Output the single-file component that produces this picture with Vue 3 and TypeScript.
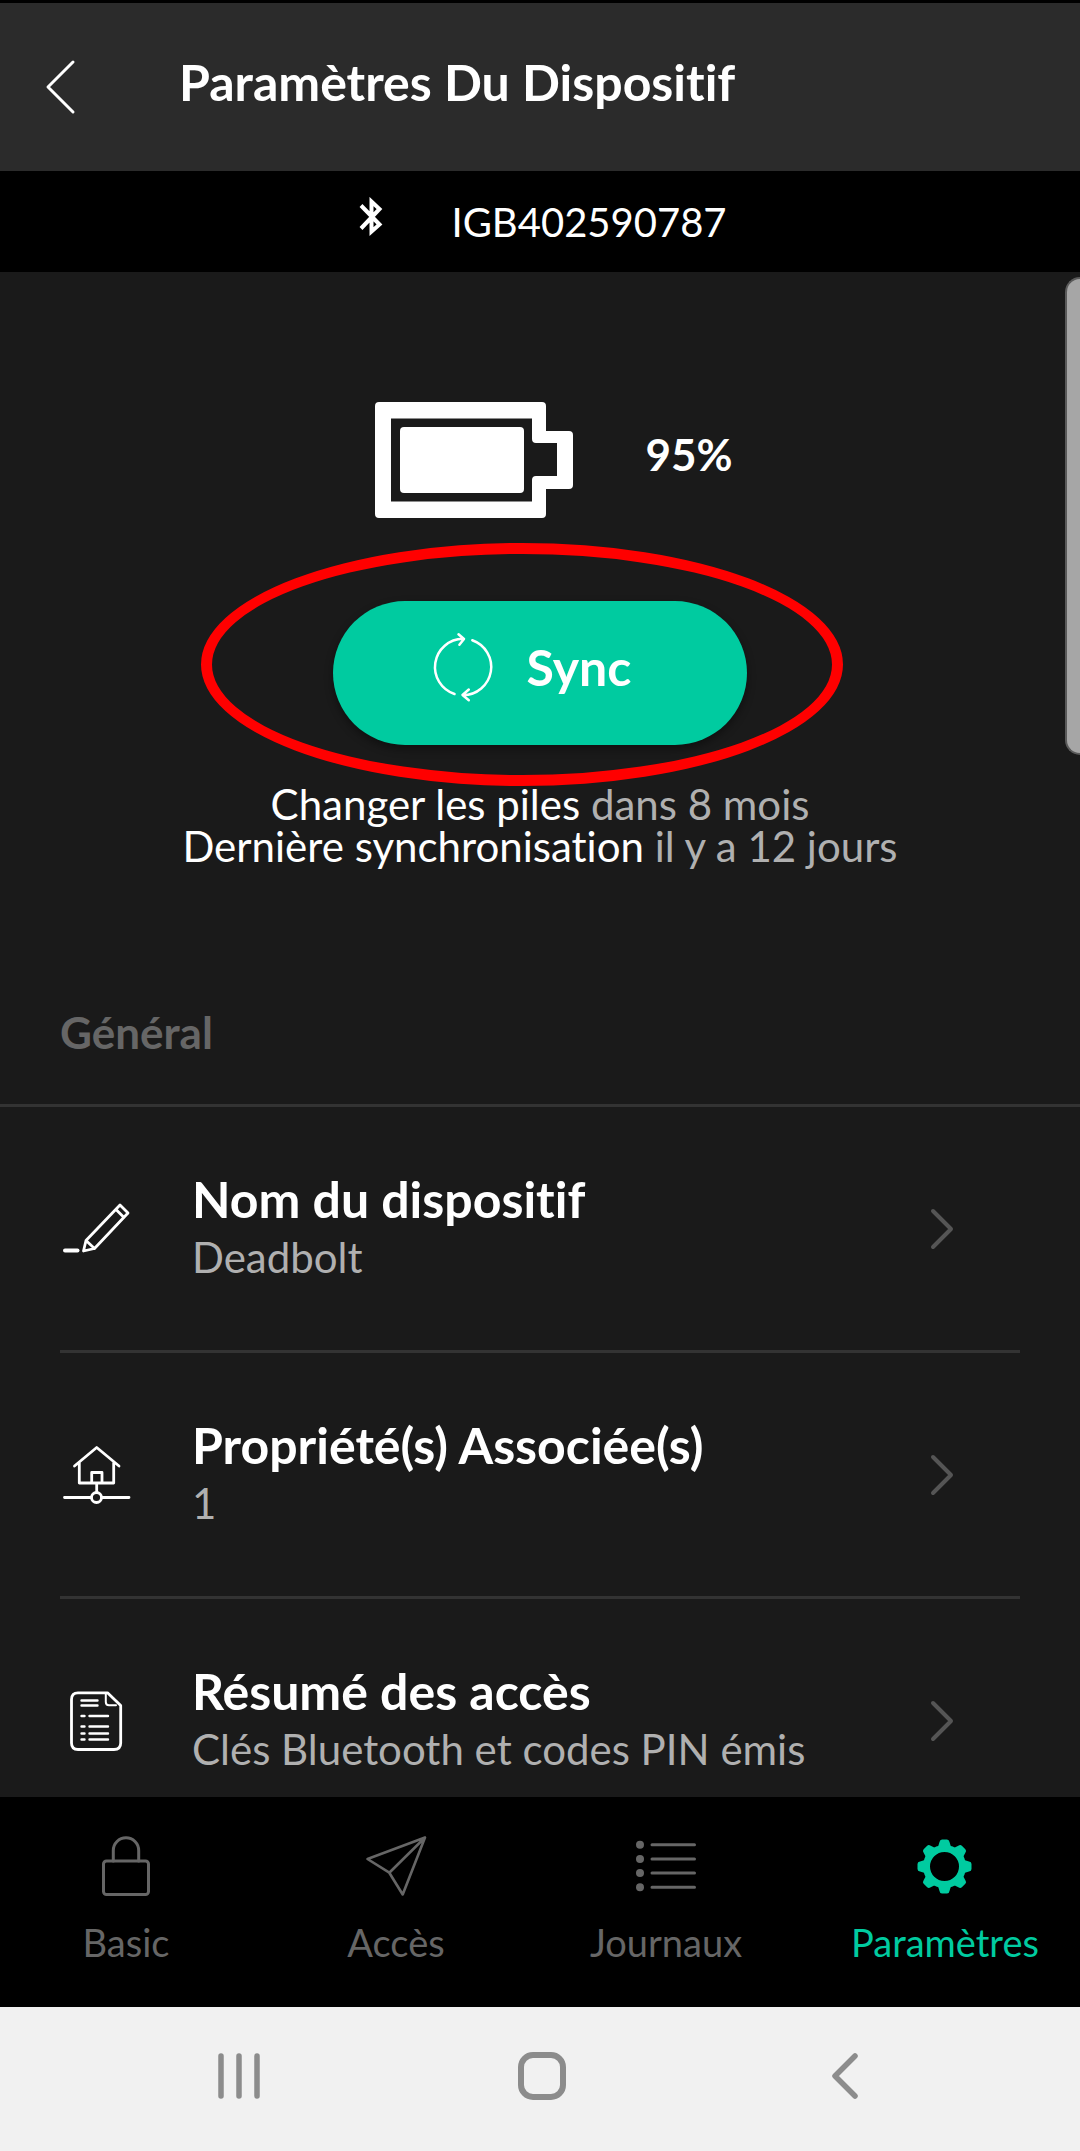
<script setup lang="ts">
import { ref } from 'vue'

type IconName = 'pencil' | 'house' | 'document'
type TabName = 'basic' | 'access' | 'journal' | 'settings'

interface SettingRow {
  icon: IconName
  title: string
  detail: string
}

interface Tab {
  id: TabName
  label: string
}

const rows: SettingRow[] = [
  { icon: 'pencil', title: 'Nom du dispositif', detail: 'Deadbolt' },
  { icon: 'house', title: 'Propriété(s) Associée(s)', detail: '1' },
  { icon: 'document', title: 'Résumé des accès', detail: 'Clés Bluetooth et codes PIN émis' },
]

const tabs: Tab[] = [
  { id: 'basic', label: 'Basic' },
  { id: 'access', label: 'Accès' },
  { id: 'journal', label: 'Journaux' },
  { id: 'settings', label: 'Paramètres' },
]

const activeTab = ref<TabName>('settings')
const gearAngles: number[] = [0, 45, 90, 135, 180, 225, 270, 315]
</script>

<template>
  <div class="app">
    <header class="header">
      <button class="back" type="button" aria-label="Retour">
        <svg width="32" height="56" viewBox="0 0 32 56" fill="none" stroke="currentColor" stroke-width="3" stroke-linecap="round" stroke-linejoin="round">
          <path d="M29 3 4 28l25 25" />
        </svg>
      </button>
      <h1 class="title">Paramètres Du Dispositif</h1>
    </header>

    <div class="device">
      <svg width="24" height="50" viewBox="0 0 24 50" fill="none" stroke="currentColor" stroke-width="4" aria-hidden="true">
        <path d="M2 8.500 20.500 27.500 12.500 34.500V4.500L20.500 12 2 31.500" />
      </svg>
      <span>IGB402590787</span>
    </div>

    <main class="content">
      <section class="status">
        <div class="battery">
          <svg width="198" height="116" viewBox="0 0 198 116" aria-hidden="true">
            <path
              fill="currentColor"
              fill-rule="evenodd"
              d="M4 0H167Q171 0 171 4V29H194Q198 29 198 33V83Q198 87 194 87H171V112Q171 116 167 116H4Q0 116 0 112V4Q0 0 4 0ZM16 16.500V99.500H157V78Q157 74 161 74H182V41H161Q157 41 157 37V16.500Z"
            />
            <rect x="25" y="25" width="124" height="66" rx="4" fill="currentColor" />
          </svg>
          <strong>95%</strong>
        </div>

        <div class="sync-wrap">
          <button class="sync" type="button">
            <svg width="72" height="72" viewBox="0 0 72 72" fill="none" stroke="currentColor" stroke-width="2.500" stroke-linecap="round" stroke-linejoin="round" aria-hidden="true">
              <path d="M27.500 63A28.300 28.300 0 0 1 36 7.800M31.500 3.200 37 8l-4.600 5.800" />
              <path d="M45.300 9.200A28.300 28.300 0 0 1 36 64.200M41.800 58.500 35.500 64l6.300 5.200" />
            </svg>
            <span>Sync</span>
          </button>
          <span class="highlight" aria-hidden="true"></span>
        </div>

        <p class="summary">
          Changer les piles <span class="muted">dans 8 mois</span><br />
          Dernière synchronisation <span class="muted">il y a 12 jours</span>
        </p>
      </section>

      <h2 class="section-title">Général</h2>

      <ul class="rows">
        <li v-for="row in rows" :key="row.icon">
          <button class="row" type="button">
            <svg class="row-icon" width="72" height="72" viewBox="0 0 72 72" fill="none" stroke="currentColor" stroke-width="2.800" stroke-linecap="round" stroke-linejoin="round" aria-hidden="true">
              <template v-if="row.icon === 'pencil'">
                <path d="M60 12 68 20 34.500 55.500 23.500 58 26 47.500ZM56 16.500l8 8M26 47.500l8.500 8" />
                <path d="M5 57.500H17.500" stroke-width="4" />
              </template>
              <template v-else-if="row.icon === 'house'">
                <path d="M14.500 27 36.700 8.500 59 27M19.300 24V44H53.700V24M31.700 44V33.500H42V44M36.700 44V53M4.500 58.500H31M42 58.500H69" />
                <circle cx="36.500" cy="58.500" r="5" />
              </template>
              <template v-else>
                <path d="M18 7.800H47.500L60.700 20.500V58Q60.700 64.500 54 64.500H18Q11.500 64.500 11.500 58V14.500Q11.500 7.800 18 7.800Z" />
                <path d="M45.800 8.500V17Q45.800 20.200 49 20.200H56" stroke-width="2" />
                <path d="M21.500 15.500H37.500M21.500 20.500H37.500M21.500 31H24.500M29.500 31H48M21.500 41.500H24.500M29.500 41.500H48M21.500 48.500H24.500M29.500 48.500H48M21.500 54.500H24.500M29.500 54.500H48" stroke-width="2.400" />
              </template>
            </svg>
            <span class="row-text">
              <span class="row-title">{{ row.title }}</span>
              <span class="row-detail">{{ row.detail }}</span>
            </span>
            <svg class="chevron" width="24" height="44" viewBox="0 0 24 44" fill="none" stroke="currentColor" stroke-width="4" stroke-linecap="round" stroke-linejoin="round" aria-hidden="true">
              <path d="M3 4 21 22 3 40" />
            </svg>
          </button>
        </li>
      </ul>

      <span class="scrollbar" aria-hidden="true"></span>
    </main>

    <nav class="tabs">
      <button
        v-for="tab in tabs"
        :key="tab.id"
        type="button"
        class="tab"
        :class="{ active: tab.id === activeTab }"
        @click="activeTab = tab.id"
      >
        <svg width="64" height="64" viewBox="0 0 64 64" fill="none" stroke="currentColor" stroke-width="3" stroke-linecap="round" stroke-linejoin="round" aria-hidden="true">
          <template v-if="tab.id === 'basic'">
            <rect x="9.500" y="27" width="45" height="33.500" rx="3" />
            <path d="M19.300 27V16.500a12.700 12.700 0 0 1 25.400 0V27" />
          </template>
          <path v-else-if="tab.id === 'access'" d="M61 3.500 3.500 25 25.300 38.700 38.700 60.500ZM61 3.500 25.300 38.700" stroke-width="2.600" />
          <template v-else-if="tab.id === 'journal'">
            <g fill="currentColor" stroke="none">
              <circle cx="6" cy="10.700" r="4" />
              <circle cx="6" cy="25" r="4" />
              <circle cx="6" cy="39" r="4" />
              <circle cx="6" cy="53.300" r="4" />
            </g>
            <path d="M18 10.700H60.500M18 25H60.500M18 39H60.500M18 53.300H60.500" />
          </template>
          <template v-else>
            <circle cx="31.500" cy="32.500" r="18" stroke-width="7" />
            <path
              v-for="angle in gearAngles"
              :key="angle"
              d="M24.500 14.500 26.500 8Q26.900 5.500 29 5.500H34Q36.100 5.500 36.500 8L38.500 14.500Z"
              fill="currentColor"
              stroke="none"
              :transform="`rotate(${angle} 31.5 32.5)`"
            />
          </template>
        </svg>
        <span>{{ tab.label }}</span>
      </button>
    </nav>

    <div class="system">
      <button type="button" aria-label="Applications récentes">
        <svg width="48" height="48" viewBox="0 0 48 48" fill="none" stroke="currentColor" stroke-width="5.500" stroke-linecap="round">
          <path d="M6 4V44M24 4V44M42 4V44" />
        </svg>
      </button>
      <button type="button" aria-label="Accueil">
        <svg width="48" height="48" viewBox="0 0 48 48" fill="none" stroke="currentColor" stroke-width="6">
          <rect x="3" y="3" width="42" height="42" rx="12" />
        </svg>
      </button>
      <button type="button" aria-label="Retour système">
        <svg width="48" height="48" viewBox="0 0 48 48" fill="none" stroke="currentColor" stroke-width="5.500" stroke-linecap="round" stroke-linejoin="round">
          <path d="M34 4 14 24 34 44" />
        </svg>
      </button>
    </div>
  </div>
</template>

<style>
body {
  margin: 0;
  background: #1a1a1a;
}
</style>

<style scoped>
.app {
  display: flex;
  flex-direction: column;
  height: 100vh;
  box-sizing: border-box;
  border-top: 3px solid #000;
  background: #1a1a1a;
  color: #fff;
  font-family: Lato, "Open Sans", sans-serif;
  font-size: 40px;
  font-variant-ligatures: none;
  line-height: 48px;
}

button {
  margin: 0;
  padding: 0;
  border: 0;
  background: none;
  color: inherit;
  font: inherit;
  font-variant-ligatures: none;
  cursor: pointer;
}

svg {
  display: block;
  flex: none;
}

.header {
  display: flex;
  align-items: center;
  flex: none;
  height: 168px;
  padding: 0 44px;
  background: #2b2b2b;
}

.title {
  margin: 0 0 10px 103px;
  font-size: 50px;
  font-weight: 700;
  line-height: 56px;
}

.device {
  display: flex;
  align-items: center;
  justify-content: center;
  gap: 68px;
  flex: none;
  height: 101px;
  padding-left: 6px;
  background: #000;
}

.content {
  position: relative;
  flex: 1;
  min-height: 0;
  overflow: hidden;
}

.status {
  display: flex;
  flex-direction: column;
  align-items: center;
  padding-top: 130px;
}

.battery {
  display: flex;
  align-items: center;
  gap: 72px;
  padding-left: 28px;
}

.battery strong {
  padding-bottom: 12px;
  font-size: 44px;
  font-weight: 700;
}

.sync-wrap {
  position: relative;
  margin-top: 83px;
}

.sync {
  display: flex;
  align-items: center;
  justify-content: center;
  gap: 28px;
  width: 414px;
  height: 144px;
  padding: 0 22px 12px 0;
  box-sizing: border-box;
  border-radius: 72px;
  background: #00cba0;
  box-shadow: 0 4px 8px rgba(0, 0, 0, 0.4);
  font-size: 50px;
  font-weight: 700;
}

/* Red ellipse drawn over the sync button */
.highlight {
  position: absolute;
  top: -58px;
  left: -132px;
  width: 642px;
  height: 243px;
  box-sizing: border-box;
  border: 11px solid #f00;
  border-radius: 50%;
  pointer-events: none;
}

.summary {
  margin: 38px 0 0;
  font-size: 42px;
  line-height: 42px;
  text-align: center;
}

.muted {
  color: #b0b0b0;
}

.section-title {
  margin: 0;
  padding: 141px 60px 48px;
  border-bottom: 3px solid #333;
  color: #666;
  font-size: 44px;
  font-weight: 700;
}

.rows {
  margin: 0;
  padding: 0 60px;
  list-style: none;
}

.rows li + li {
  border-top: 3px solid #333;
}

.row {
  display: flex;
  align-items: center;
  width: 100%;
  height: 243px;
  text-align: left;
}

.row-text {
  flex: 1;
  padding: 0 0 4px 60px;
}

.row-title,
.row-detail {
  display: block;
}

.row-title {
  font-size: 50px;
  font-weight: 700;
  line-height: 60px;
}

.row-detail {
  color: #b0b0b0;
  font-size: 42px;
  line-height: 56px;
}

.chevron {
  margin-right: 66px;
  color: #555;
}

.scrollbar {
  position: absolute;
  top: 5px;
  right: 0;
  width: 15px;
  height: 478px;
  box-sizing: border-box;
  border: 2px solid #5a5a5a;
  border-right: 0;
  border-radius: 15px 0 0 15px;
  background: #a6a6a6;
}

.tabs {
  display: grid;
  grid-template-columns: repeat(4, 1fr);
  flex: none;
  height: 210px;
  background: #000;
  color: #666;
  font-size: 38px;
}

.tab {
  display: flex;
  flex-direction: column;
  align-items: center;
  gap: 20px;
  padding: 37px 18px 0 0;
}

.tab:last-child {
  padding-right: 0;
}

.tab.active {
  color: #00cba0;
}

.system {
  display: grid;
  grid-template-columns: repeat(3, 1fr);
  flex: none;
  height: 144px;
  padding: 0 84px 0 88px;
  background: #f1f1f1;
  color: #8c8c8c;
}

.system button {
  display: flex;
  align-items: center;
  justify-content: center;
  padding-bottom: 6px;
}
</style>
